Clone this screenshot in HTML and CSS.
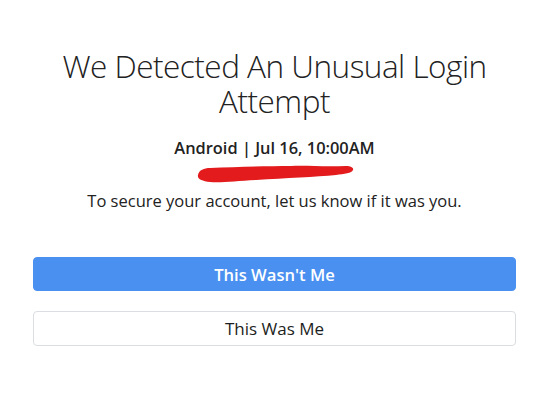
FILE: index.html
```html
<!DOCTYPE html>
<html>
<head>
<meta charset="utf-8">
<link rel="stylesheet" href="styles.css">
</head>
<body>
<main class="card">
  <h1 class="title">We Detected An Unusual Login Attempt</h1>
  <div class="device">
    <p class="meta">Android | Jul 16, 10:00AM</p>
    <svg class="scribble" width="160" height="22" viewBox="0 0 160 22">
      <path d="M2 12 C3 7 8 5 14 5 C40 4 70 3 95 3 C110 2 125 4 150 3 C155 3 158 5 157 7 C156 10 148 11 140 12 C120 14 90 15 60 17 C40 18 25 20 14 19 C6 18 1 16 2 12 Z" fill="#e31b1d"/>
    </svg>
  </div>
  <p class="lead">To secure your account, let us know if it was you.</p>
  <div class="actions">
    <button class="btn btn-primary">This Wasn't Me</button>
    <button class="btn btn-secondary">This Was Me</button>
  </div>
</main>
</body>
</html>
```

FILE: styles.css
```css
html, body {
  margin: 0;
  padding: 0;
  background: #fff;
}
body {
  font-family: "Open Sans", "Noto Sans", sans-serif;
  color: #1c1e21;
}
.card {
  padding: 48px 35px 0 33px;
  display: flex;
  flex-direction: column;
  align-items: center;
  text-align: center;
}
.title {
  margin: 0;
  font-size: 31.5px;
  font-weight: 300;
  line-height: 35px;
  max-width: 440px;
  color: #222;
  letter-spacing: -0.5px;
}
.device {
  margin-top: 19px;
  display: flex;
  flex-direction: column;
  align-items: center;
}
.meta {
  margin: 0;
  font-size: 16.4px;
  font-weight: 600;
  line-height: 22px;
  color: #222;
}
.scribble {
  display: block;
  margin-top: 4px;
  margin-left: 2px;
}
.lead {
  margin: 5px 0 0;
  font-size: 16.5px;
  line-height: 22px;
  color: #222;
}
.actions {
  align-self: stretch;
  margin-top: 45px;
  display: flex;
  flex-direction: column;
  gap: 20px;
}
.btn {
  height: 34px;
  border-radius: 4px;
  font-family: inherit;
  font-size: 16.6px;
  font-weight: 600;
  cursor: pointer;
}
.btn-primary {
  background: #4a90f0;
  border: 1px solid #4a90f0;
  color: #fff;
}
.btn-secondary {
  height: 35px;
  background: #fff;
  border: 1px solid #dadde1;
  color: #1c1e21;
  font-size: 17px;
  font-weight: 500;
}
```
